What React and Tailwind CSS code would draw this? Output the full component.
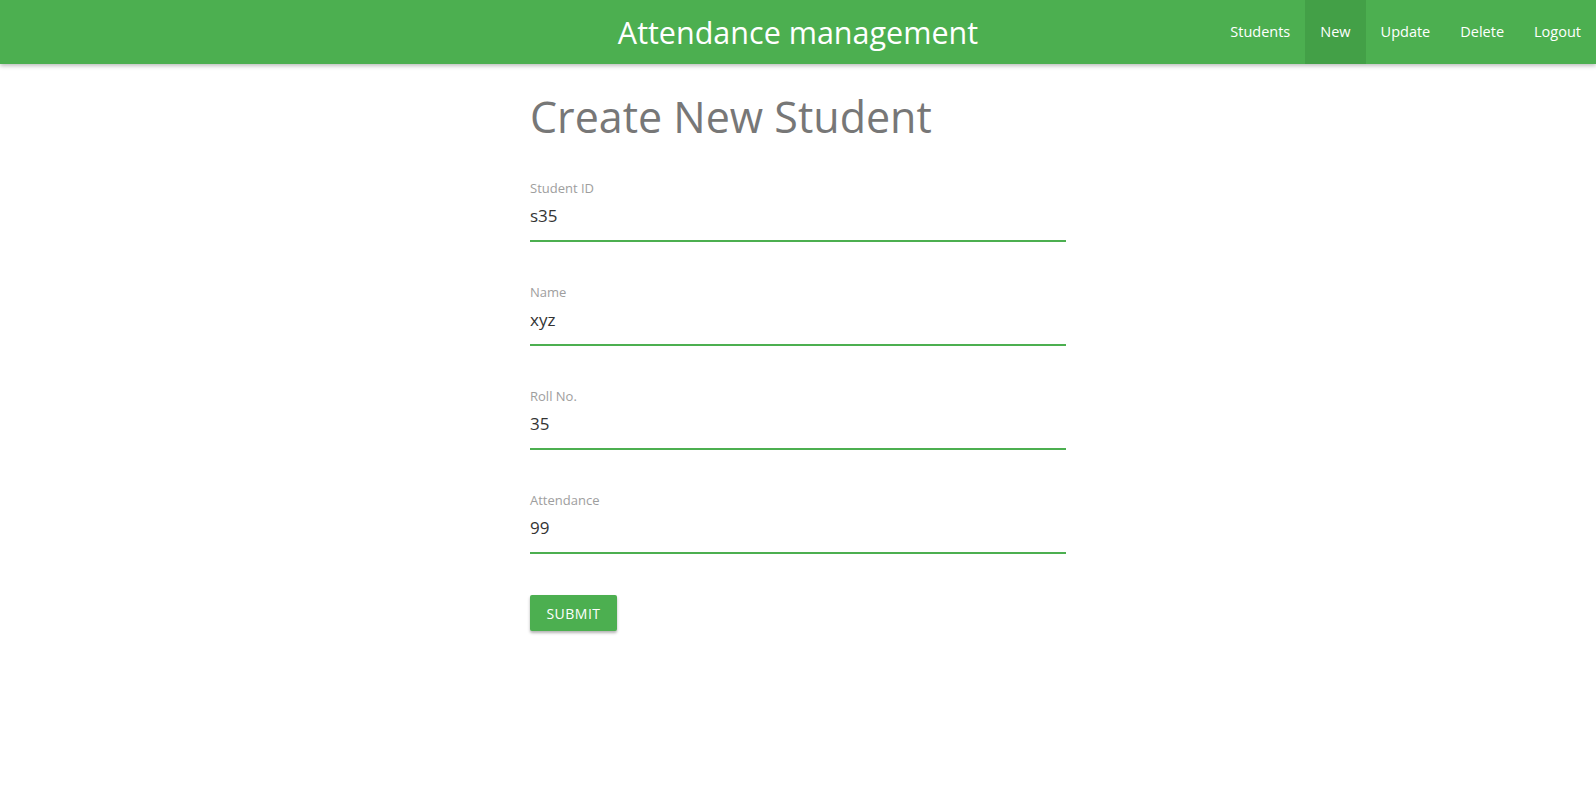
import React, { useState } from 'react';

const navLinks = ['Students', 'New', 'Update', 'Delete', 'Logout'];

function Field({ label, value, onChange }) {
  return (
    <div className="flex flex-col">
      <label className="text-[13px] leading-4 text-[#9e9e9e]">{label}</label>
      <input
        value={value}
        onChange={(e) => onChange(e.target.value)}
        className="h-[46px] w-full bg-transparent pb-[6px] text-[17px] text-[#333] outline-none border-b-2 border-[#4caf50]"
      />
    </div>
  );
}

export default function App() {
  const [form, setForm] = useState({ id: 's35', name: 'xyz', roll: '35', attendance: '99' });
  const set = (key) => (v) => setForm({ ...form, [key]: v });

  return (
    <div className="min-h-screen bg-white" style={{ fontFamily: '"Open Sans", sans-serif' }}>
      <nav className="relative h-16 bg-[#4caf50] shadow-[0_2px_4px_rgba(0,0,0,0.25)] text-white">
        <div className="flex h-full items-center justify-center">
          <span className="text-[30.5px] leading-none">Attendance management</span>
        </div>
        <ul className="absolute right-0 top-0 flex h-full">
          {navLinks.map((l) => (
            <li key={l}>
              <a
                href="#"
                className={`flex h-16 items-center px-[15px] text-[14.5px] ${l === 'New' ? 'bg-[#43a047]' : ''}`}
              >
                {l}
              </a>
            </li>
          ))}
        </ul>
      </nav>

      <main className="mx-auto w-[536px] pt-[29px]">
        <h1 className="text-[43px] leading-[48px] text-[#777]">Create New Student</h1>

        <form className="mt-[39px] flex flex-col gap-[42px]" onSubmit={(e) => e.preventDefault()}>
          <Field label="Student ID" value={form.id} onChange={set('id')} />
          <Field label="Name" value={form.name} onChange={set('name')} />
          <Field label="Roll No." value={form.roll} onChange={set('roll')} />
          <Field label="Attendance" value={form.attendance} onChange={set('attendance')} />
          <div className="-mt-px">
            <button
              type="submit"
              className="h-9 w-[87px] rounded-[2px] bg-[#4caf50] text-[14px] tracking-[0.5px] text-white shadow-[0_2px_3px_rgba(0,0,0,0.3)]"
            >
              SUBMIT
            </button>
          </div>
        </form>
      </main>
    </div>
  );
}
